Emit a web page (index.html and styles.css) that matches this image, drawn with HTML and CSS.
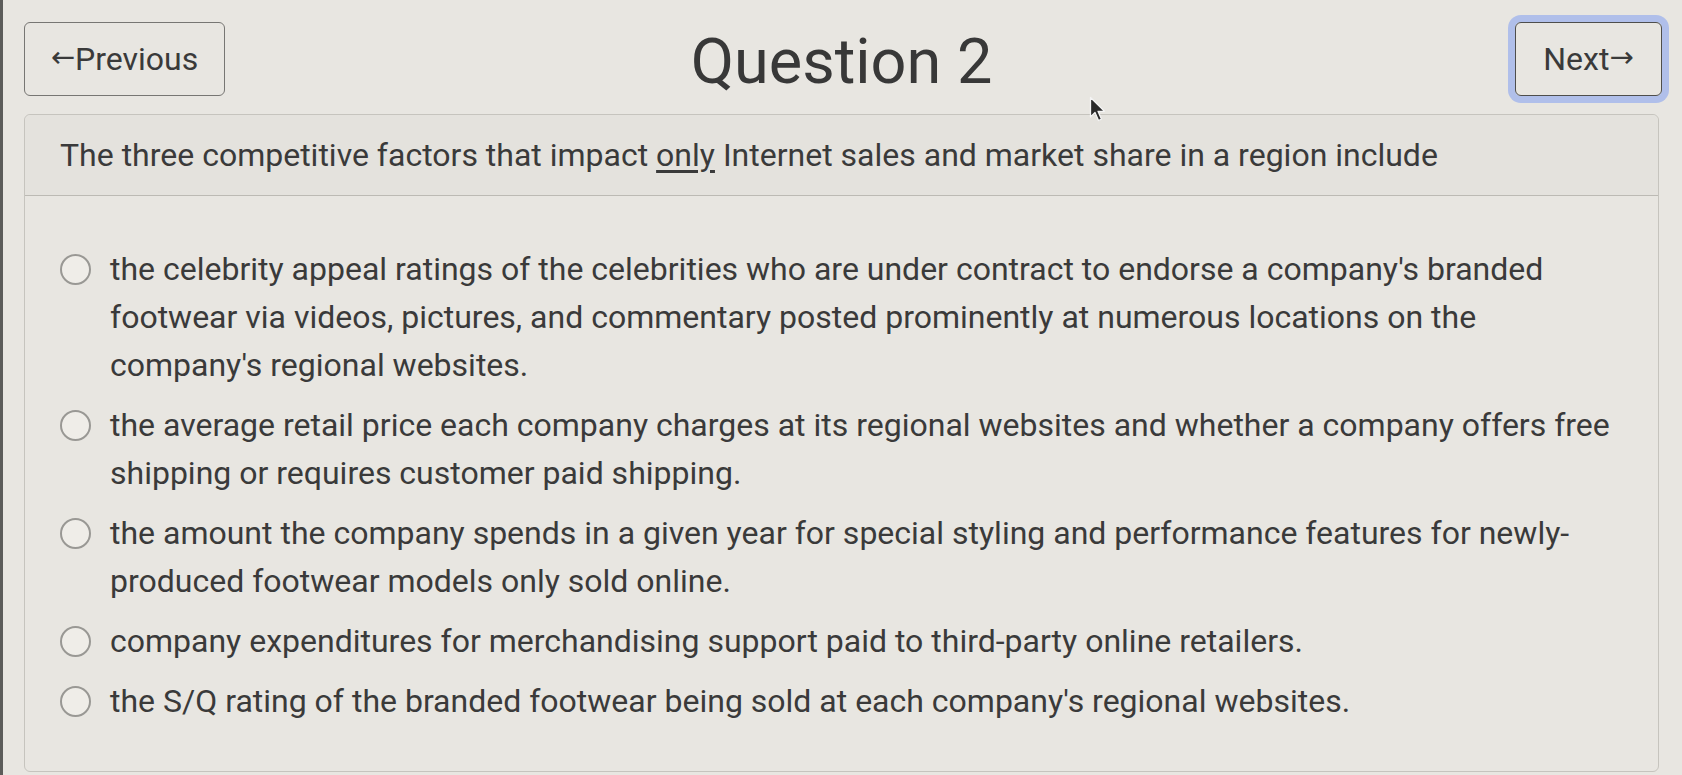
FILE: index.html
```html
<!DOCTYPE html>
<html lang="en">
<head>
<meta charset="utf-8">
<title>Question 2</title>
<link rel="stylesheet" href="styles.css">
</head>
<body>
<div class="page">
  <div class="topbar">
    <button class="btn btn-prev"><span class="arrow">←</span>Previous</button>
    <h1 class="title">Question 2</h1>
    <button class="btn btn-next">Next<span class="arrow">→</span></button>
  </div>
  <div class="card">
    <div class="card-header">The three competitive factors that impact <u>only</u> Internet sales and market share in a region include</div>
    <div class="card-body">
      <label class="option"><span class="radio"></span><span class="opt-text">the celebrity appeal ratings of the celebrities who are under contract to endorse a company's branded footwear via videos, pictures, and commentary posted prominently at numerous locations on the company's regional websites.</span></label>
      <label class="option"><span class="radio"></span><span class="opt-text">the average retail price each company charges at its regional websites and whether a company offers free shipping or requires customer paid shipping.</span></label>
      <label class="option"><span class="radio"></span><span class="opt-text">the amount the company spends in a given year for special styling and performance features for newly-produced footwear models only sold online.</span></label>
      <label class="option"><span class="radio"></span><span class="opt-text">company expenditures for merchandising support paid to third-party online retailers.</span></label>
      <label class="option"><span class="radio"></span><span class="opt-text">the S/Q rating of the branded footwear being sold at each company's regional websites.</span></label>
    </div>
  </div>
</div>
<svg class="cursor" width="18" height="27" viewBox="0 0 18 27"><path d="M1.5 1.5 L1.5 21 L6 16.5 L9.5 24.5 L12.5 23.2 L9 15.3 L15.5 15.3 Z" fill="#2a2a2a" stroke="#f4f4f4" stroke-width="1.3" stroke-linejoin="round"/></svg>
</body>
</html>
```

FILE: styles.css
```css
html {
  background: #e8e6e1;
}
body {
  margin: 0;
  min-height: 775px;
  box-sizing: border-box;
  border-left: 3px solid #5c5c5a;
  font-family: Roboto, "Liberation Sans", sans-serif;
  color: #3a3a3a;
  position: relative;
}
.page {
  padding: 20px 23px 0 21px;
}
.topbar {
  display: grid;
  grid-template-columns: 1fr auto 1fr;
  align-items: center;
  height: 78px;
}
.btn {
  font-family: inherit;
  font-size: 32px;
  color: #3a3a3a;
  background: transparent;
  border: 1.5px solid #777673;
  border-radius: 6px;
  height: 74px;
  padding: 0;
  display: flex;
  align-items: center;
  justify-content: center;
}
.arrow {
  font-family: "DejaVu Sans", sans-serif;
  font-size: 29px;
  position: relative;
  top: -2px;
}
.btn-prev {
  justify-self: start;
  width: 201px;
}
.btn-next {
  justify-self: end;
  width: 147px;
  margin-right: -3px;
  border-color: #4e4e4c;
  box-shadow: 0 0 0 7px #b0bfea;
}
.title {
  margin: 4px 0 0;
  font-size: 63px;
  font-weight: 400;
  line-height: 1;
  color: #383838;
}
.card {
  margin-top: 16px;
  border: 1.5px solid #c6c4be;
  border-radius: 6px;
}
.card-header {
  background: #e4e2dd;
  border-bottom: 1.5px solid #bcbab4;
  border-radius: 6px 6px 0 0;
  padding: 16px 35px;
  font-size: 32px;
  line-height: 48px;
}
.card-header u {
  text-underline-offset: 4px;
}
.card-body {
  padding: 49px 35px 46px;
  display: flex;
  flex-direction: column;
  gap: 12px;
}
.option {
  display: flex;
  align-items: flex-start;
  gap: 19px;
  font-size: 32px;
  line-height: 48px;
}
.radio {
  flex: none;
  width: 31px;
  height: 31px;
  margin-top: 9px;
  box-sizing: border-box;
  border: 2px solid #999894;
  border-radius: 50%;
  background: #efede8;
}
.cursor {
  position: absolute;
  left: 1086px;
  top: 96px;
}
```
